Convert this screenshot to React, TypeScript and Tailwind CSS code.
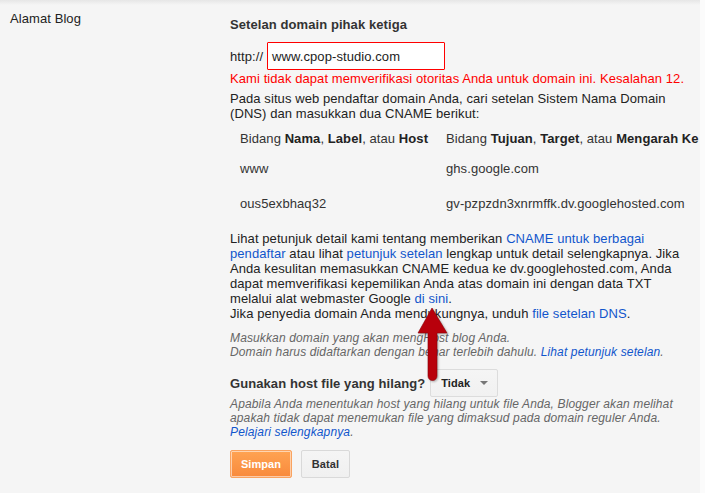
import React from "react";

const link = "text-[#1155cc]";

export default function App() {
  return (
    <div
      className="w-[705px] h-[493px] flex bg-[#f5f5f5] text-[#222] text-[13px] leading-[15px] tracking-[0.08px] overflow-hidden relative"
      style={{ fontFamily: '"Liberation Sans", Arial, sans-serif' }}
    >
      <div className="w-[700px] h-full flex relative overflow-hidden">
        <div className="absolute left-0 top-0 w-full h-[5px] bg-gradient-to-b from-[#e6e6e6] to-[#f5f5f5]" />
        <div className="w-[230px] shrink-0 pl-[10px] pt-[11px]">Alamat Blog</div>
        <div className="flex-1 pt-[17px] whitespace-nowrap">
          <div className="font-bold text-[#333]">Setelan domain pihak ketiga</div>
          <div className="mt-[10px] flex items-center h-[28px]">
            <span>http://</span>
            <div className="ml-[4px] w-[178px] h-[28px] bg-white border border-[#ff0000] rounded-[1px] flex items-center pl-[4px]">
              www.cpop-studio.com
            </div>
          </div>
          <div className="mt-[1px] text-[#ff0000]">
            Kami tidak dapat memverifikasi otoritas Anda untuk domain ini. Kesalahan 12.
          </div>
          <div className="mt-[5px]">
            <div>Pada situs web pendaftar domain Anda, cari setelan Sistem Nama Domain</div>
            <div>(DNS) dan masukkan dua CNAME berikut:</div>
          </div>
          <div className="mt-[10px] pl-[10px] grid grid-cols-[206px_1fr] grid-rows-[30px_35px_35px] text-[#333]">
            <div>
              Bidang <b className="text-[#222]">Nama</b>, <b className="text-[#222]">Label</b>, atau{" "}
              <b className="text-[#222]">Host</b>
            </div>
            <div>
              Bidang <b className="text-[#222]">Tujuan</b>, <b className="text-[#222]">Target</b>, atau{" "}
              <b className="text-[#222]">Mengarah Ke</b>
            </div>
            <div>www</div>
            <div>ghs.google.com</div>
            <div>ous5exbhaq32</div>
            <div>gv-pzpzdn3xnrmffk.dv.googlehosted.com</div>
          </div>
          <div>
            <div>
              Lihat petunjuk detail kami tentang memberikan <span className={link}>CNAME untuk berbagai</span>
            </div>
            <div>
              <span className={link}>pendaftar</span> atau lihat <span className={link}>petunjuk setelan</span> lengkap untuk detail selengkapnya. Jika
            </div>
            <div>Anda kesulitan memasukkan CNAME kedua ke dv.googlehosted.com, Anda</div>
            <div>dapat memverifikasi kepemilikan Anda atas domain ini dengan data TXT</div>
            <div>
              melalui alat webmaster Google <span className={link}>di sini</span>.
            </div>
            <div>
              Jika penyedia domain Anda mendukungnya, unduh <span className={link}>file setelan DNS</span>.
            </div>
          </div>
          <div className="mt-[10px] text-[12px] leading-[14px] tracking-[0.13px] italic text-[#666]">
            <div>Masukkan domain yang akan mengHost blog Anda.</div>
            <div>
              Domain harus didaftarkan dengan benar terlebih dahulu. <span className={link}>Lihat petunjuk setelan</span>.
            </div>
          </div>
          <div className="mt-[10px] flex items-center h-[28px]">
            <span className="font-bold text-[#333]">Gunakan host file yang hilang?</span>
            <div className="ml-[5px] w-[68px] h-[28px] border border-[#dcdcdc] rounded-[2px] bg-gradient-to-b from-[#f5f5f5] to-[#f1f1f1] flex items-center pl-[10px] text-[11px] font-bold text-[#222]">
              <span>Tidak</span>
              <span className="ml-[10px] w-0 h-0 border-l-[4px] border-r-[4px] border-t-[4px] border-l-transparent border-r-transparent border-t-[#777]" />
            </div>
          </div>
          <div className="text-[12px] leading-[14px] tracking-[0.13px] italic text-[#666]">
            <div>Apabila Anda menentukan host yang hilang untuk file Anda, Blogger akan melihat</div>
            <div>apakah tidak dapat menemukan file yang dimaksud pada domain reguler Anda.</div>
            <div>
              <span className={link}>Pelajari selengkapnya</span>.
            </div>
          </div>
          <div className="mt-[11px] flex gap-[9px]">
            <button className="w-[62px] h-[28px] rounded-[2px] border border-[#f9a360] bg-gradient-to-b from-[#ffa352] to-[#f88a3c] text-white text-[11px] font-bold shadow-[inset_0_0_0_1px_rgba(255,255,255,0.55)]">
              Simpan
            </button>
            <button className="w-[49px] h-[28px] rounded-[2px] border border-[#d9d9d9] bg-gradient-to-b from-[#f5f5f5] to-[#f0f0f0] text-[#333] text-[11px] font-bold">
              Batal
            </button>
          </div>
        </div>
      </div>
      <div className="w-[5px] h-full bg-[#fbfbfb]" />
      <svg
        className="absolute left-[415px] top-[305px]"
        width="36"
        height="80"
        viewBox="0 0 36 80"
        style={{ filter: "drop-shadow(1px 1px 1px rgba(0,0,0,0.3))" }}
      >
        <path
          d="M17 3 L32 28 L22 28 L22 71 A4.5 4.5 0 0 1 13 71 L13 28 L3 28 Z"
          fill="#b8000b"
          stroke="#8c0008"
          strokeWidth="0.6"
        />
      </svg>
    </div>
  );
}
